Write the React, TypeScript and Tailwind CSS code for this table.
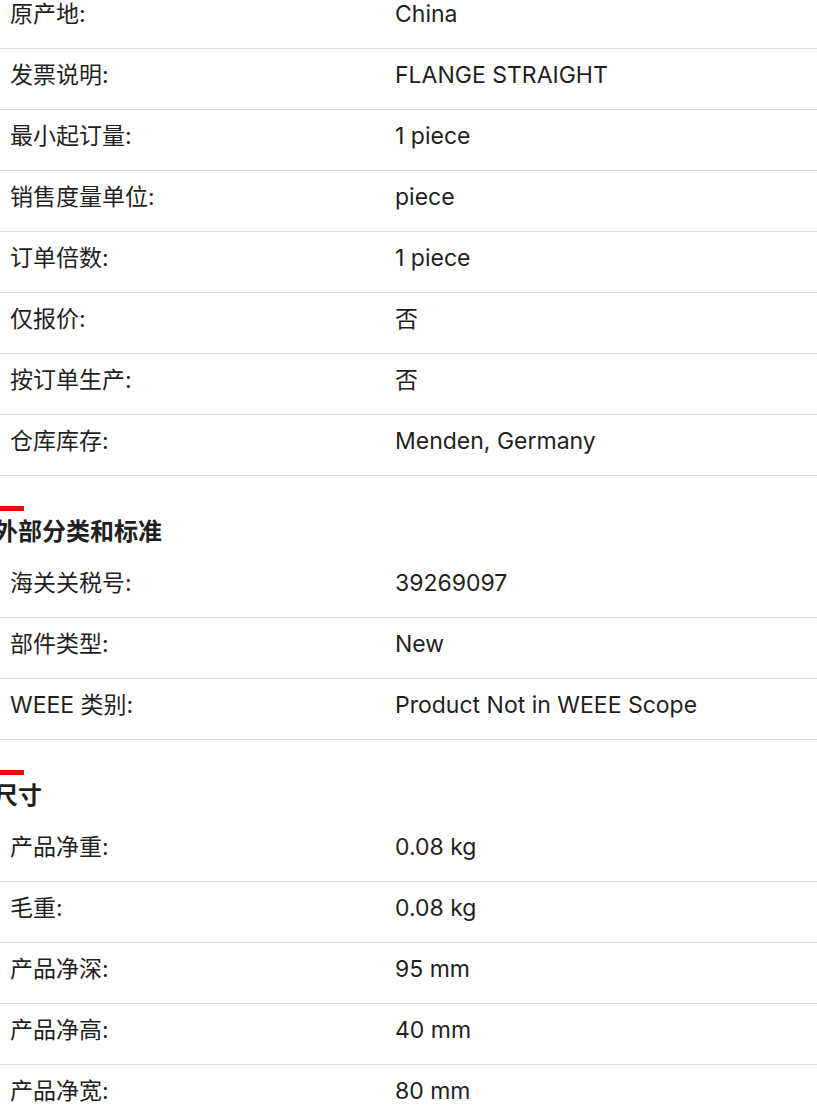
import React from "react";

type Row = { label: string; value: string };

const general: Row[] = [
  { label: "原产地:", value: "China" },
  { label: "发票说明:", value: "FLANGE STRAIGHT" },
  { label: "最小起订量:", value: "1 piece" },
  { label: "销售度量单位:", value: "piece" },
  { label: "订单倍数:", value: "1 piece" },
  { label: "仅报价:", value: "否" },
  { label: "按订单生产:", value: "否" },
  { label: "仓库库存:", value: "Menden, Germany" },
];

const classification: Row[] = [
  { label: "海关关税号:", value: "39269097" },
  { label: "部件类型:", value: "New" },
  { label: "WEEE 类别:", value: "Product Not in WEEE Scope" },
];

const dimensions: Row[] = [
  { label: "产品净重:", value: "0.08 kg" },
  { label: "毛重:", value: "0.08 kg" },
  { label: "产品净深:", value: "95 mm" },
  { label: "产品净高:", value: "40 mm" },
  { label: "产品净宽:", value: "80 mm" },
];

function SpecRows({ rows }: { rows: Row[] }) {
  return (
    <div>
      {rows.map((r) => (
        <div
          key={r.label}
          className="flex border-b border-[#dcdcdc] pt-[11px] pb-[19px] leading-[30px]"
        >
          <div className="w-[401px] shrink-0 pl-[16px]">{r.label}</div>
          <div className="flex-1">{r.value}</div>
        </div>
      ))}
    </div>
  );
}

function SectionTitle({ title }: { title: string }) {
  return (
    <div className="pt-[30px] pb-[9px]">
      <div className="h-[5px] w-[30px] bg-[#ff000f]" />
      <h2 className="mt-[5px] text-[24px] font-bold leading-[32px]">{title}</h2>
    </div>
  );
}

export default function App() {
  return (
    <div className="h-[1111px] w-[817px] overflow-hidden bg-white">
      <div
        className="-mt-[12px] -ml-[6px] w-[823px] text-[23px] text-[#1f1f1f]"
        style={{ fontFamily: '"Inter", "Noto Sans CJK SC", sans-serif' }}
      >
        <SpecRows rows={general} />
        <SectionTitle title="外部分类和标准" />
        <SpecRows rows={classification} />
        <SectionTitle title="尺寸" />
        <SpecRows rows={dimensions} />
      </div>
    </div>
  );
}
